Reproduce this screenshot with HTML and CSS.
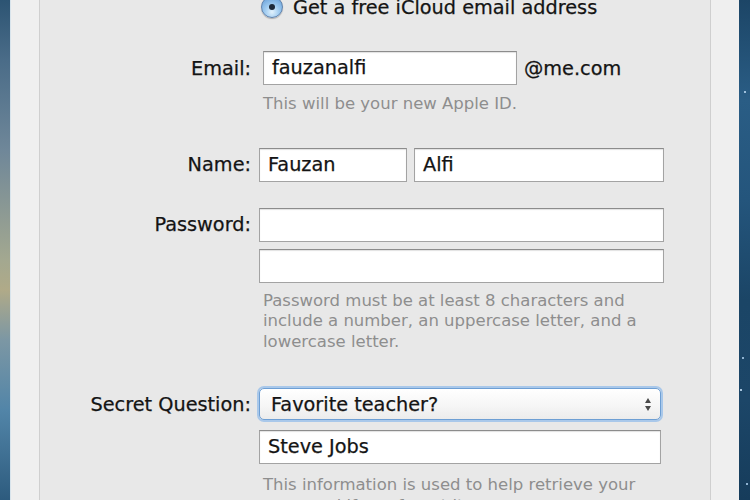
FILE: index.html
```html
<!DOCTYPE html>
<html lang="en">
<head>
<meta charset="utf-8">
<title>iCloud sign up</title>
<link rel="stylesheet" href="styles.css">
</head>
<body>
<div class="screen">
  <div class="wall wall-left"></div>
  <div class="side side-left"></div>
  <main class="panel">
    <form class="form">
      <div class="row row-radio">
        <div></div>
        <div class="radio"><span class="radio-btn"><span class="radio-dot"></span></span><span class="radio-text">Get a free iCloud email address</span></div>
      </div>

      <div class="row row-email">
        <span class="label">Email:</span>
        <div class="email-field"><span class="input input-email">fauzanalfi</span><span class="suffix">@me.com</span></div>
      </div>
      <div class="row row-help-email">
        <div></div>
        <p class="help">This will be your new Apple ID.</p>
      </div>

      <div class="row row-name">
        <span class="label">Name:</span>
        <div class="name-fields"><span class="input input-first">Fauzan</span><span class="input input-last">Alfi</span></div>
      </div>

      <div class="row row-password">
        <span class="label">Password:</span>
        <span class="input input-full"></span>
      </div>
      <div class="row row-password2">
        <div></div>
        <span class="input input-full"></span>
      </div>
      <div class="row row-help-password">
        <div></div>
        <p class="help">Password must be at least 8 characters and include a number, an uppercase letter, and a lowercase letter.</p>
      </div>

      <div class="row row-question">
        <span class="label">Secret Question:</span>
        <div class="select"><span class="select-text">Favorite teacher?</span><span class="arrows"><span class="arrow-up"></span><span class="arrow-down"></span></span></div>
      </div>
      <div class="row row-answer">
        <div></div>
        <span class="input input-answer">Steve Jobs</span>
      </div>
      <div class="row row-help-answer">
        <div></div>
        <p class="help">This information is used to help retrieve your password if you forget it.</p>
      </div>
    </form>
  </main>
  <div class="side side-right"></div>
  <div class="wall wall-right"></div>
</div>
</body>
</html>
```
FILE: styles.css
```css
* { box-sizing: border-box; }
html, body { margin: 0; padding: 0; }
body {
  width: 750px;
  height: 500px;
  overflow: hidden;
  font-family: "DejaVu Sans", "Lucida Grande", sans-serif;
  color: #141414;
}
.screen {
  display: flex;
  width: 750px;
  height: 500px;
  overflow: hidden;
}
.wall { width: 11px; flex: none; }
.wall-left {
  background: linear-gradient(180deg, #2c5473 0%, #4a6c88 12%, #6f8799 30%, #a3a890 52%, #b0aa88 58%, #7c97a4 68%, #5285a8 82%, #2d5b7e 100%);
  box-shadow: inset -1px 0 0 #d8e4ec;
}
.wall-right {
  background:
    radial-gradient(circle at 6px 92px, #9fc0dc 0 1px, transparent 1.5px),
    radial-gradient(circle at 4px 358px, #8fb3d2 0 1px, transparent 1.5px),
    radial-gradient(circle at 2px 390px, #a7c5de 0 1px, transparent 1.5px),
    radial-gradient(circle at 8px 484px, #8fb3d2 0 1px, transparent 1.5px),
    linear-gradient(180deg, #1c4566 0%, #2a5d85 20%, #24557c 40%, #1b4566 60%, #1c4668 80%, #163c5b 100%);
}
.side {
  flex: none;
  background: #efefef;
}
.side-left { border-right: 1px solid #cfcfcf; width: 29px; }
.side-right { border-left: 1px solid #cfcfcf; width: 29px; }
.panel {
  width: 670px;
  flex: none;
  background: #e8e8e8;
}
.form {
  margin-top: -8px;
  display: flex;
  flex-direction: column;
}
.row {
  display: grid;
  grid-template-columns: 211px 405px;
  column-gap: 8px;
  align-items: center;
}
.label, .input, .radio-text, .suffix, .select-text {
  -webkit-text-stroke: 0.25px currentColor;
}
.label {
  text-align: right;
  font-size: 19.3px;
  white-space: nowrap;
}
.input {
  display: block;
  height: 34px;
  background: #fff;
  border: 1px solid #a3a3a3;
  border-top-color: #8c8c8c;
  box-shadow: inset 0 1px 1px rgba(0,0,0,0.12);
  font-size: 19.3px;
  line-height: 32px;
  padding-left: 8px;
  white-space: nowrap;
}
.help {
  margin: 0;
  padding-left: 4px;
  font-size: 16.5px;
  line-height: 20.5px;
  color: #8e8e8e;
}

/* radio row */
.row-radio { height: 30px; }
.radio {
  display: flex;
  align-items: center;
  gap: 10px;
  padding-left: 2px;
}
.radio-btn {
  width: 22px;
  height: 22px;
  border-radius: 50%;
  border: 1px solid #5f82ad;
  background: radial-gradient(circle at 50% 75%, #e2f2fd 0%, #9fcbf0 40%, #5a95d3 100%);
  box-shadow: 0 1px 1px rgba(0,0,0,0.25);
  display: flex;
  align-items: center;
  justify-content: center;
}
.radio-dot {
  width: 6px;
  height: 6px;
  border-radius: 50%;
  background: #1d2a3a;
}
.radio-text { font-size: 19.3px; white-space: nowrap; }

/* email */
.row-email { margin-top: 29px; }
.email-field {
  display: flex;
  align-items: center;
  gap: 7px;
  padding-left: 4px;
}
.input-email { width: 254px; }
.suffix { font-size: 19.3px; }
.row-help-email { margin-top: 9px; }

/* name */
.row-name { margin-top: 33px; }
.name-fields {
  display: flex;
  gap: 7px;
}
.input-first { width: 148px; }
.input-last { width: 250px; }

/* password */
.row-password { margin-top: 26px; }
.row-password2 { margin-top: 7px; }
.input-full { width: 405px; }
.row-help-password { margin-top: 8px; }

/* question */
.row-question { margin-top: 36px; }
.select {
  width: 402px;
  height: 32px;
  border-radius: 5px;
  border: 1px solid #6e9fd4;
  box-shadow: 0 0 0 2px #a9c8ea, inset 0 1px 0 #fff;
  background: linear-gradient(180deg, #ffffff 0%, #f6f6f6 55%, #ececec 100%);
  display: flex;
  align-items: center;
  justify-content: space-between;
  padding: 0 9px 0 11px;
}
.select-text { font-size: 19.3px; }
.arrows {
  display: flex;
  flex-direction: column;
  gap: 3px;
}
.arrow-up, .arrow-down {
  width: 0;
  height: 0;
  border-left: 3.5px solid transparent;
  border-right: 3.5px solid transparent;
}
.arrow-up { border-bottom: 5px solid #4a4a4a; }
.arrow-down { border-top: 5px solid #4a4a4a; }

.row-answer { margin-top: 10px; }
.input-answer { width: 402px; }
.row-help-answer { margin-top: 11px; }
```
